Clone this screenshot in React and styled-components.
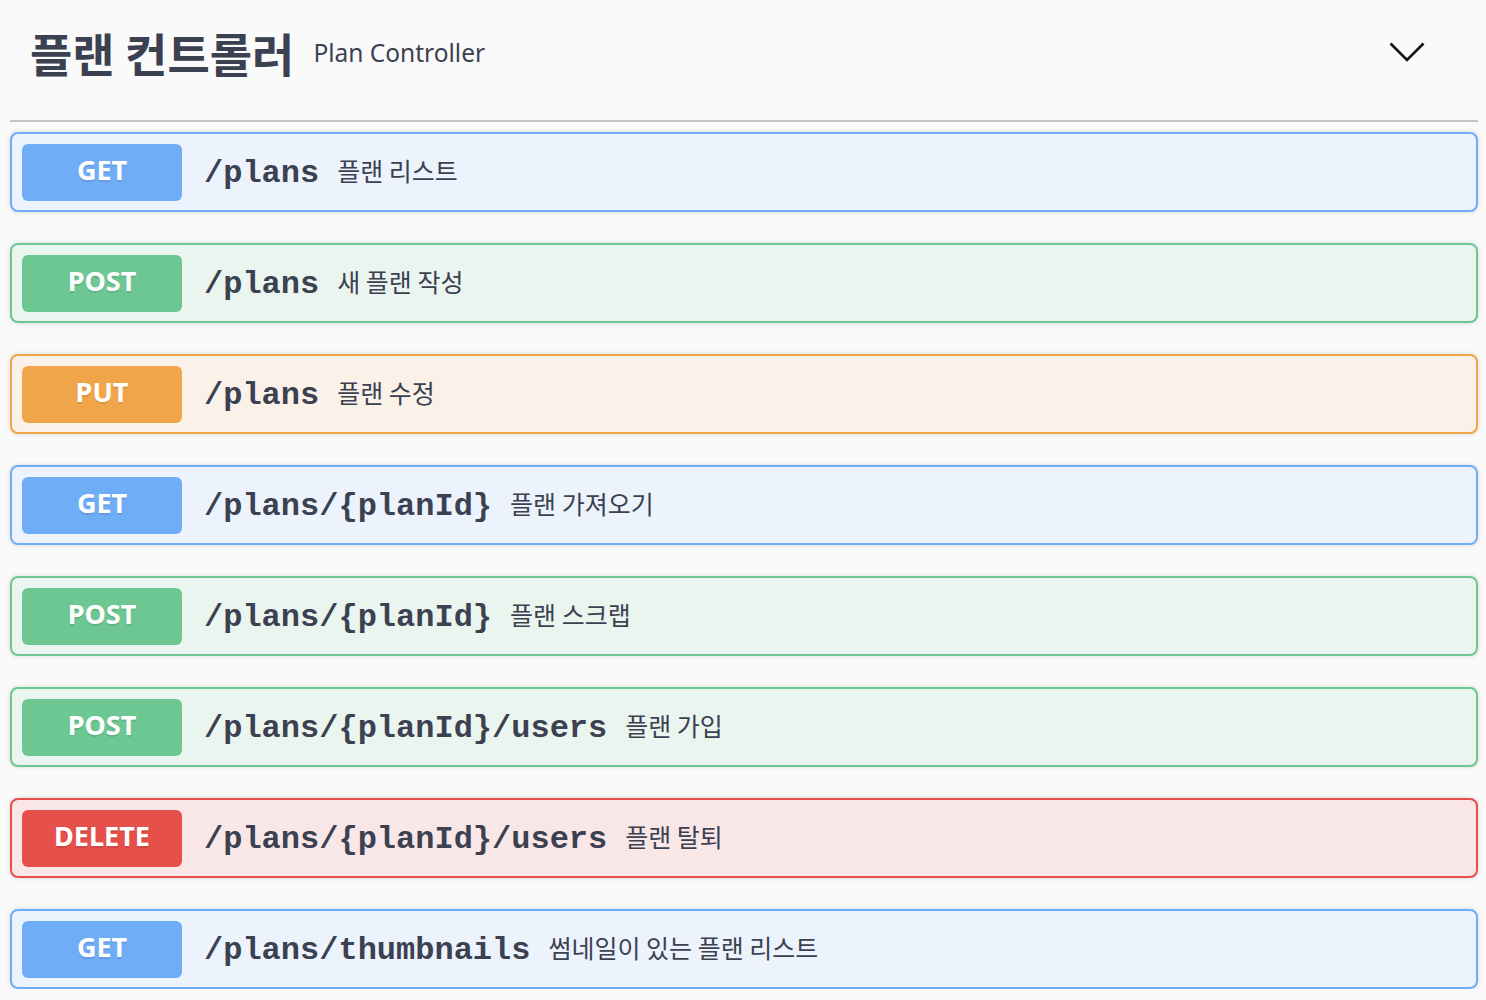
import { createGlobalStyle, styled } from "styled-components";

const GlobalStyle = createGlobalStyle`
  html, body {
    margin: 0;
    padding: 0;
    background: #fafafa;
  }
  body {
    font-family: "Noto Sans", "Noto Sans CJK KR", sans-serif;
    color: #3b4151;
  }
`;

const methods = {
  GET: { main: "#6fadf7", bg: "#ecf3fc" },
  POST: { main: "#6cc792", bg: "#ebf5ef" },
  PUT: { main: "#f0a54a", bg: "#faf2e9" },
  DELETE: { main: "#e5504b", bg: "#f9e7e7" },
};

const endpoints = [
  { method: "GET", path: "/plans", desc: "플랜 리스트" },
  { method: "POST", path: "/plans", desc: "새 플랜 작성" },
  { method: "PUT", path: "/plans", desc: "플랜 수정" },
  { method: "GET", path: "/plans/{planId}", desc: "플랜 가져오기" },
  { method: "POST", path: "/plans/{planId}", desc: "플랜 스크랩" },
  { method: "POST", path: "/plans/{planId}/users", desc: "플랜 가입" },
  { method: "DELETE", path: "/plans/{planId}/users", desc: "플랜 탈퇴" },
  { method: "GET", path: "/plans/thumbnails", desc: "썸네일이 있는 플랜 리스트" },
];

function App() {
  return (
    <>
      <GlobalStyle />
      <Container>
        <TagHeader>
          <Title>플랜 컨트롤러</Title>
          <SubTitle>Plan Controller</SubTitle>
          <Chevron width="40" height="24" viewBox="0 0 40 24">
            <polyline
              points="3.5,3.5 20,20 36.5,3.5"
              fill="none"
              stroke="#111"
              strokeWidth="2.6"
            />
          </Chevron>
        </TagHeader>
        <List>
          {endpoints.map((e, i) => (
            <OpBlock key={i} $method={e.method}>
              <Badge $method={e.method}>{e.method}</Badge>
              <Path>{e.path}</Path>
              <Desc>{e.desc}</Desc>
            </OpBlock>
          ))}
        </List>
      </Container>
    </>
  );
}

const Container = styled.div`
  padding: 0 8px 0 10px;
`;

const TagHeader = styled.div`
  display: flex;
  align-items: center;
  height: 104px;
  padding: 0 51px 16px 20px;
  border-bottom: 2px solid #c5c6ca;
  margin-bottom: 10px;
`;

const Title = styled.h3`
  margin: 0;
  font-family: "Noto Sans CJK KR", "Noto Sans", sans-serif;
  font-size: 46px;
  font-weight: 700;
  color: #3b4151;
`;

const SubTitle = styled.small`
  margin-left: 19px;
  padding-top: 1px;
  font-family: "Noto Sans", "Noto Sans CJK KR", sans-serif;
  font-size: 24.5px;
  color: #3b4151;
  flex: 1;
`;

const Chevron = styled.svg`
  display: block;
`;

const List = styled.div`
  display: flex;
  flex-direction: column;
  gap: 31px;
`;

const OpBlock = styled.div`
  display: flex;
  align-items: center;
  height: 76px;
  padding: 0 10px;
  border: 2px solid ${({ $method }) => methods[$method].main};
  background: ${({ $method }) => methods[$method].bg};
  border-radius: 8px;
  box-shadow: 0 0 5px rgba(0, 0, 0, 0.14);
`;

const Badge = styled.span`
  display: flex;
  align-items: center;
  justify-content: center;
  box-sizing: border-box;
  width: 160px;
  height: 57px;
  padding-bottom: 5px;
  flex-shrink: 0;
  border-radius: 6px;
  background: ${({ $method }) => methods[$method].main};
  color: #fff;
  font-family: "Noto Sans", sans-serif;
  font-size: 27px;
  font-weight: 700;
  text-shadow: 0 2px 0 rgba(0, 0, 0, 0.1);
`;

const Path = styled.span`
  margin-left: 22px;
  padding-top: 3px;
  font-family: "Liberation Mono", "DejaVu Sans Mono", monospace;
  font-size: 32px;
  font-weight: 700;
  color: #3b4151;
`;

const Desc = styled.span`
  margin-left: 18px;
  padding-bottom: 5px;
  font-family: "Noto Sans CJK KR", "Noto Sans", sans-serif;
  font-size: 25px;
  color: #3b4151;
`;

export default App;
